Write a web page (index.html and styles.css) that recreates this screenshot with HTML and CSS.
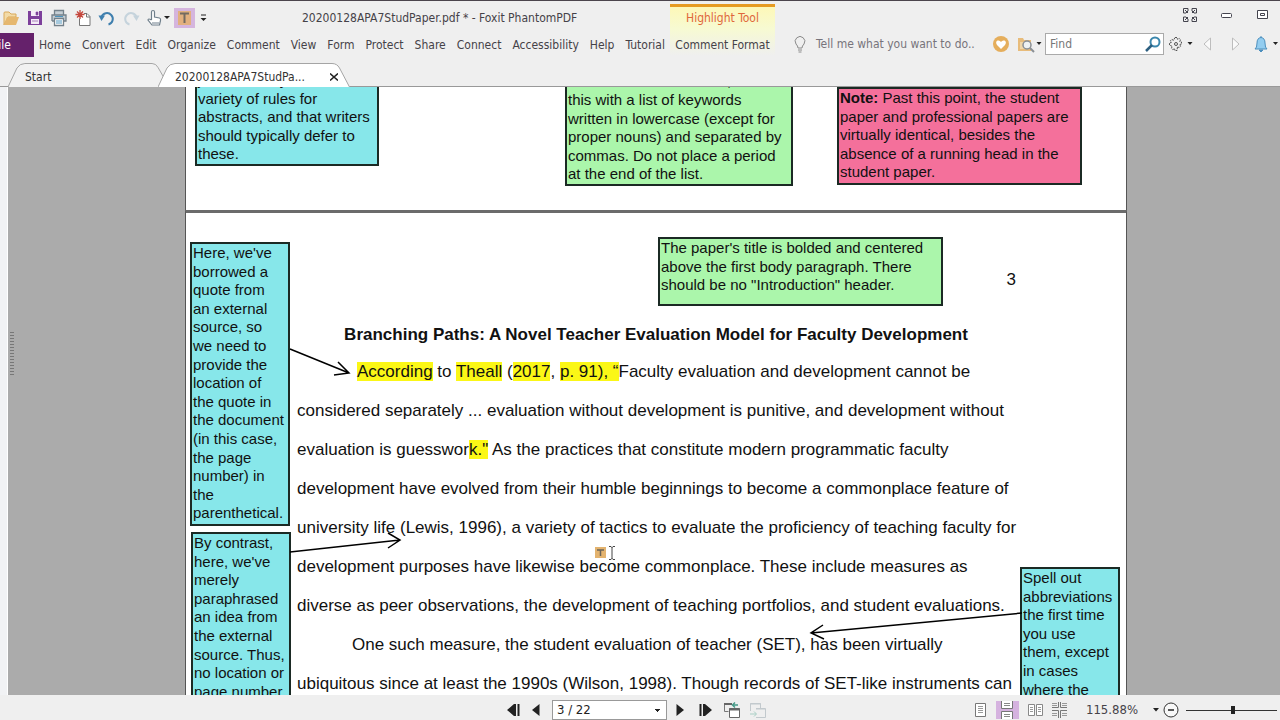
FILE: index.html
```html
<!DOCTYPE html>
<html lang="en">
<head>
<meta charset="utf-8">
<title>20200128APA7StudPaper.pdf * - Foxit PhantomPDF</title>
<link rel="stylesheet" href="styles.css">
</head>
<body>
<div class="app">
  <header class="ribbon">
    <div class="ribbon-main">
      <div class="quick">
        <button class="tool" aria-label="Open"><svg width="18" height="18" viewBox="0 0 18 18"><path d="M2 16V4q0-1 1-1h4l2 2h5v3H6z" fill="#f3dba8" stroke="#d9a95b"/><path d="M2 16l3-8h12l-3 8z" fill="#e6b870"/></svg></button>
        <button class="tool" aria-label="Save"><svg width="18" height="18" viewBox="0 0 18 18"><path d="M2 2h14v14H2z" fill="#7d3f9b"/><path d="M5 2h8v5H5zM5 10h8v5H5z" fill="#f3eaf6"/><path d="M10 3h2v3h-2zM6 12h6" fill="#7d3f9b" stroke="#7d3f9b" stroke-width=".6"/></svg></button>
        <button class="tool" aria-label="Print"><svg width="18" height="18" viewBox="0 0 18 18"><path d="M4.500 6V1.500h9V6M2 12V6h14v6h-2M4 12H2" fill="#c6cfd5" stroke="#74818a" stroke-width="1.300"/><path d="M4.500 9.500h9v7h-9z" fill="#fff" stroke="#74818a" stroke-width="1.300"/><path d="M6 12h6M6 14h6" stroke="#4c94bd"/><path d="M5 7.500h8" stroke="#4c94bd"/></svg></button>
        <button class="tool" aria-label="New"><svg width="18" height="18" viewBox="0 0 18 18"><path d="M10 4.500h3l3 3v9H5.500V10" fill="#fff" stroke="#777"/><path d="M12.500 4.500V8H16" fill="none" stroke="#777"/><path d="M6 1v9M1.500 5.500h9M3 2.500l6 6M9 2.500l-6 6" stroke="#c5473d" stroke-width="1.300"/></svg></button>
        <button class="tool" aria-label="Undo"><svg width="18" height="18" viewBox="0 0 18 18"><path d="M3.500 8a5.800 5.800 0 1 1 7 7.500" fill="none" stroke="#3f7fae" stroke-width="2"/><path d="M.500 6.500H7L3.500 12z" fill="#3f7fae"/></svg></button>
        <button class="tool" aria-label="Redo"><svg width="18" height="18" viewBox="0 0 18 18"><path d="M14.500 8a5.800 5.800 0 1 0-7 7.500" fill="none" stroke="#c5d3dc" stroke-width="2"/><path d="M17.500 6.500H11l3.500 5.500z" fill="#c5d3dc"/></svg></button>
        <button class="tool" aria-label="Hand"><svg width="24" height="18" viewBox="0 0 24 18"><path d="M5.500 11V3q0-1.500 1.500-1.500T8.500 3v5l5 1q1.500.500 1 2.500l-1 4.500H6l-4-5q0-2 3.500 0M6 14h7" fill="#fff" stroke="#6f7f8b" stroke-width="1.200"/><path d="M18 7h6l-3 3z" fill="#222"/></svg></button>
        <button class="tool tool-active" aria-label="Highlight"><svg width="21" height="20" viewBox="0 0 21 20"><path d="M4 3h13v14H4z" fill="#e2b07e"/><path d="M6 5.500h9M10.500 5.500V15" stroke="#746a60" stroke-width="2"/></svg></button>
        <button class="tool tool-more" aria-label="Customize"><svg width="7" height="8" viewBox="0 0 7 8"><path d="M1 1h5" stroke="#222"/><path d="M.500 4h6l-3 3z" fill="#222"/></svg></button>
        <h1 class="window-title">20200128APA7StudPaper.pdf * - Foxit PhantomPDF</h1>
      </div>
      <nav class="menu">
        <button class="file">File</button>
        <button>Home</button><button>Convert</button><button>Edit</button><button>Organize</button><button>Comment</button><button>View</button><button>Form</button><button>Protect</button><button>Share</button><button>Connect</button><button>Accessibility</button><button>Help</button><button>Tutorial</button>
      </nav>
    </div>
    <div class="context">
      <span class="context-name">Highlight Tool</span>
      <button class="context-menu">Comment Format</button>
    </div>
    <div class="ribbon-side">
      <div class="window-controls">
        <button aria-label="Full screen"><svg width="14" height="14" viewBox="0 0 14 14" fill="none" stroke="#44444e"><path d="M.500 5V.500H5V3L3 5zM9 .500h4.500V5H11L9 3zM.500 9v4.500H5V11L3 9zM9 13.500h4.500V9H11l-2 2zM2 2l3 3M12 2L9 5M2 12l3-3M12 12L9 9"/></svg></button>
        <button aria-label="Minimize"><svg width="12" height="14" viewBox="0 0 12 14"><rect x=".5" y="5.500" width="10" height="4" rx="1" fill="#fff" stroke="#44444e"/></svg></button>
        <button aria-label="Restore"><svg width="12" height="14" viewBox="0 0 12 14" fill="#fff" stroke="#44444e"><path d="M.500 2.500h10v8H.500zM3.500 5.500h4v2h-4z"/></svg></button>
      </div>
      <div class="search-row">
        <svg class="bulb" width="12" height="17" viewBox="0 0 12 17" fill="none" stroke="#8a8a8a"><path d="M4 12q0-2-2-4a4.800 4.800 0 1 1 8 0q-2 2-2 4zM4 14h4M4.500 16h3"/></svg>
        <span class="tell">Tell me what you want to do..</span>
        <button aria-label="Favorites"><svg width="16" height="16" viewBox="0 0 16 16"><circle cx="8" cy="8" r="8" fill="#e5ae5c"/><path d="M8 13L4 9Q2 6 4.500 4.500 7 4 8 6q1-2 3.500-1.500Q14 6 12 9z" fill="#fff"/></svg></button>
        <button class="find-folder" aria-label="Search files"><svg width="25" height="17" viewBox="0 0 25 17"><path d="M1 15V2h5l1 2h7v11z" fill="#e8bc7b"/><path d="M3 6h9v7H3z" fill="#f1d6a8"/><circle cx="10" cy="9" r="4" fill="#eef1f2" stroke="#8a8f94" stroke-width="1.500"/><path d="M13 12l4 4" stroke="#8a8f94" stroke-width="2"/><path d="M19.500 6h5L22 9z" fill="#222"/></svg></button>
        <label class="find"><input type="text" placeholder="Find" aria-label="Find"><svg width="16" height="16" viewBox="0 0 16 16"><circle cx="10" cy="6" r="4.500" fill="#fff" stroke="#3b87ad" stroke-width="2"/><path d="M7 9l-6 6" stroke="#2d5f80" stroke-width="2.500"/></svg></label>
        <button class="gear" aria-label="Settings"><svg width="25" height="16" viewBox="0 0 25 16"><path d="M7 1.500h2l.5 1.800 1.700-.9 1.400 1.400-.9 1.700 1.800.5v2l-1.800.5.9 1.700-1.400 1.400-1.700-.9L9 14.500H7l-.5-1.800-1.700.9-1.400-1.400.9-1.700L1.500 9V7l1.800-.5-.9-1.700 1.400-1.400 1.700.9z" fill="none" stroke="#555" stroke-dasharray="2 .7"/><circle cx="8" cy="8" r="1.500" fill="none" stroke="#555"/><path d="M19.500 6h5L22 9z" fill="#222"/></svg></button>
        <button class="prev" aria-label="Previous"><svg width="9" height="14" viewBox="0 0 9 14"><path d="M7.500 1v12L1 7z" fill="#fafafa" stroke="#bdbdbd"/></svg></button>
        <button class="next" aria-label="Next"><svg width="9" height="14" viewBox="0 0 9 14"><path d="M1.500 1v12L8 7z" fill="#fafafa" stroke="#bdbdbd"/></svg></button>
        <button class="bell" aria-label="Notifications"><svg width="25" height="16" viewBox="0 0 25 16"><path d="M1 13q2-1 2-6 0-5 4-5.500 4 .500 4 5.500 0 5 2 6z" fill="#93cdf0" stroke="#4c8fbd"/><path d="M5 14h4l-2 2zM7 0v2" fill="#4c8fbd" stroke="#4c8fbd"/><path d="M19 6h5l-2.500 3z" fill="#222"/></svg></button>
      </div>
    </div>
  </header>

  <div class="tabs" role="tablist">
    <button class="tab tab-start" role="tab"><svg class="tab-shape" viewBox="0 0 158 24" preserveAspectRatio="none"><path d="M0 24L9 5q3-4.500 8-4.500h128q4 0 6 4l7 12V24" fill="#f1f1f1"/><path d="M0 24L9 5q3-4.500 8-4.500h128q4 0 6 4l7 12" fill="none" stroke="#a5a5a5"/></svg><span>Start</span></button>
    <button class="tab tab-open" role="tab" aria-selected="true"><svg class="tab-shape" viewBox="0 0 192 24" preserveAspectRatio="none"><path d="M0 24L9 5q3-4.500 8-4.500h157q5 0 7.500 4.500l10 19" fill="#fff" stroke="#a5a5a5"/></svg><span>20200128APA7StudPa...</span><svg class="close" width="8" height="8" viewBox="0 0 8 8"><path d="M0 .500l8 7M8 .500l-8 7" stroke="#222" stroke-width="1.500"/></svg></button>
  </div>

  <main class="workspace">
    <aside class="side-rail"></aside>
    <div class="canvas">
      <div class="grip"></div>
      <div class="pages">
        <section class="page page-abstract">
          <p class="note cyan n-journals">journals, may have a<br>variety of rules for<br>abstracts, and that writers<br>should typically defer to<br>these.</p>
          <p class="note green n-keywords">and in italic. Then follow,<br>this with a list of keywords<br>written in lowercase (except for<br>proper nouns) and separated by<br>commas. Do not place a period<br>at the end of the list.</p>
          <p class="note pink n-point"><b>Note:</b> Past this point, the student<br>paper and professional papers are<br>virtually identical, besides the<br>absence of a running head in the<br>student paper.</p>
        </section>
        <section class="page page-body">
          <div class="page-number">3</div>
          <h2>Branching Paths: A Novel Teacher Evaluation Model for Faculty Development</h2>
          <p class="first"><mark>According</mark> to <mark>Theall</mark> (<mark>2017</mark>, <mark>p. 91), “</mark>Faculty evaluation and development cannot be</p>
          <p>considered separately ... evaluation without development is punitive, and development without<br>evaluation is guesswor<mark>k."</mark> As the practices that constitute modern programmatic faculty<br>development have evolved from their humble beginnings to become a commonplace feature of<br>university life (Lewis, 1996), a variety of tactics to evaluate the proficiency of teaching faculty for<br>development purposes have likewise become commonplace. These include measures as<br>diverse as peer observations, the development of teaching portfolios, and student evaluations.</p>
          <p class="indent">One such measure, the student evaluation of teacher (SET), has been virtually<br>ubiquitous since at least the 1990s (Wilson, 1998). Though records of SET-like instruments can</p>
          <p class="note green n-title">The paper's title is bolded and centered<br>above the first body paragraph. There<br>should be no "Introduction" header.</p>
          <p class="note cyan n-quote">Here, we've<br>borrowed a<br>quote from<br>an external<br>source, so<br>we need to<br>provide the<br>location of<br>the quote in<br>the document<br>(in this case,<br>the page<br>number) in<br>the<br>parenthetical.</p>
          <p class="note cyan n-contrast">By contrast,<br>here, we've<br>merely<br>paraphrased<br>an idea from<br>the external<br>source. Thus,<br>no location or<br>page number</p>
          <p class="note cyan n-spell">Spell out<br>abbreviations<br>the first time<br>you use<br>them, except<br>in cases<br>where the</p>
          <svg class="arrows" width="940" height="482" viewBox="0 0 940 482" fill="none" stroke="#000" stroke-width="1.500"><path d="M103 136L162 160M151 149L162 160L147 162M103 339L213 327M201 320L213 327L201 335M835 400L624 420M636 412L624 420L637 426"/></svg>
          <svg class="cursor" width="22" height="16" viewBox="0 0 22 16"><path d="M1 2h11v11H1z" fill="#e3b36f"/><path d="M3 5h7M6.500 5v6" stroke="#6b6458" stroke-width="1.500"/><path d="M15 1.500h2l1 1 1-1h2M18 2v12M15 14.500h2l1-1 1 1h2" fill="none" stroke="#444"/></svg>
        </section>
      </div>
    </div>
  </main>

  <footer class="status">
    <div class="pager">
      <button aria-label="First page"><svg width="13" height="14" viewBox="0 0 13 14" fill="#222"><path d="M7 1v12L0 7zM7 1h2v12H7zM10.500 1h2v12h-2z"/></svg></button>
      <button aria-label="Previous page"><svg width="8" height="14" viewBox="0 0 8 14"><path d="M7.500 1v12L0 7z" fill="#222"/></svg></button>
      <select aria-label="Page"><option>3 / 22</option></select>
      <button aria-label="Next page"><svg width="8" height="14" viewBox="0 0 8 14"><path d="M.500 1v12L8 7z" fill="#222"/></svg></button>
      <button class="last" aria-label="Last page"><svg width="13" height="14" viewBox="0 0 13 14" fill="#222"><path d="M6 1v12l7-6zM4 1h2v12H4zM.500 1h2v12h-2z"/></svg></button>
      <button aria-label="Previous view"><svg width="16" height="17" viewBox="0 0 16 17"><path d="M4.500 9.500h-4v-8h7" fill="none" stroke="#777"/><path d="M0 2h8" stroke="#666" stroke-width="2"/><path d="M5.500 6.500h10v9h-10z" fill="#fff" stroke="#666"/><path d="M5 7.500h11" stroke="#666" stroke-width="2"/><path d="M14 3H9M11 .500L8.500 3 11 5.500" fill="none" stroke="#479b89" stroke-width="1.500"/></svg></button>
      <button class="next-view" aria-label="Next view"><svg width="16" height="17" viewBox="0 0 16 17" fill="none" stroke="#c2c9cd"><path d="M.500 9V1.500h10v5M6 6.500h9.500v9H6M0 2h11M6 7h9"/><path d="M0 12h6M4 9.500L6.500 12 4 14.500" stroke="#a9cfc5"/></svg></button>
    </div>
    <div class="view-tools">
      <button aria-label="Single page"><svg width="12" height="16" viewBox="0 0 12 16"><path d="M.500 1.500h10v13H.500z" fill="#fff" stroke="#777"/><path d="M3 4.500h5M3 6.500h5M3 8.500h5M3 10.500h5" stroke="#999"/></svg></button>
      <button class="selected" aria-label="Continuous"><svg width="12" height="18" viewBox="0 0 12 18"><path d="M.500 0v7.500h11V0M.500 18v-7.500h11V18" fill="#fff" stroke="#777"/><path d="M3 2.500h6M3 4.500h6M3 13.500h6M3 15.500h6" stroke="#888"/></svg></button>
      <button aria-label="Facing"><svg width="15" height="16" viewBox="0 0 15 16"><path d="M.500 2.500h6v11h-6zM8.500 2.500h6v11h-6z" fill="#fff" stroke="#888"/><path d="M2 5.500h3M2 7.500h3M2 9.500h3M10 5.500h3M10 7.500h3M10 9.500h3" stroke="#999"/></svg></button>
      <button aria-label="Continuous facing"><svg width="15" height="18" viewBox="0 0 15 18" fill="none" stroke="#777"><path d="M0 6.500h6.500V1M15 6.500H8.500V1M0 9.500h6.500V17M15 9.500H8.500V17"/><path d="M0 2.500h5M0 4.500h5M10 2.500h5M10 4.500h5M0 12.500h5M0 14.500h5M10 12.500h5M10 14.500h5" stroke="#999"/></svg></button>
      <button class="zoom-value"><span>115.88%</span><svg width="6" height="4" viewBox="0 0 6 4"><path d="M0 0h6L3 3.500z" fill="#222"/></svg></button>
      <button aria-label="Zoom out"><svg width="16" height="16" viewBox="0 0 16 16"><circle cx="8" cy="8" r="7" fill="#f8f8f8" stroke="#333"/><path d="M5 8h6" stroke="#222" stroke-width="1.500"/></svg></button>
      <input type="range" min="0" max="100" value="52" aria-label="Zoom">
    </div>
  </footer>
</div>
</body>
</html>
```
FILE: styles.css
```css
* { box-sizing: border-box; }
body { margin: 0; background: #efefef; }
.app {
  display: flex;
  flex-direction: column;
  height: 100vh;
  overflow: hidden;
  border-top: 1px solid #4b454d;
  font: 12px/16px "DejaVu Sans Condensed", "Noto Sans", sans-serif;
  color: #454248;
}
button {
  display: flex;
  align-items: center;
  padding: 0;
  border: 0;
  background: none;
  font: inherit;
  color: inherit;
  white-space: nowrap;
}
svg { display: block; flex: none; }

/* Ribbon */
.ribbon { display: flex; height: 61px; flex: none; }
.ribbon-main { flex: none; width: 670px; }
.quick { display: flex; align-items: center; height: 33px; padding-left: 2px; gap: 6px; }
.tool-active { background: #d5b5de; margin-left: -2px; }
.tool-more { margin-left: -1px; }
.window-title { margin: 0 0 0 89px; font: inherit; white-space: nowrap; }
.menu { display: flex; align-items: center; height: 22px; gap: 11px; }
.menu .file {
  justify-content: flex-end;
  width: 34px;
  height: 24px;
  margin-right: -6px;
  padding-right: 23px;
  background: #65216b;
  color: #fff;
}
.context {
  display: flex;
  flex-direction: column;
  align-items: center;
  flex: none;
  width: 105px;
  height: 57px;
  margin-top: 3px;
  border-top: 3px solid #e69b23;
  background: linear-gradient(#fdf8b8, #f7fad2 40%, #efefef 90%);
}
.context-name { padding: 3px 0 11px; color: #e0673a; }
.ribbon-side { flex: 1; min-width: 0; }
.window-controls {
  display: flex;
  align-items: center;
  justify-content: flex-end;
  height: 28px;
  padding-right: 11px;
  gap: 24px;
}
.search-row { display: flex; align-items: center; height: 30px; padding: 0 1px 0 19px; }
.tell { margin: 0 auto 0 10px; color: #77747b; white-space: nowrap; }
.find-folder { margin-left: 8px; }
.find {
  display: flex;
  align-items: center;
  width: 119px;
  height: 22px;
  margin: 0 4px 0 3px;
  padding: 0 2px 0 4px;
  border: 1px solid #aaa;
  background: #fff;
}
.find input { flex: 1; min-width: 0; padding: 0; border: 0; outline: 0; background: none; font: inherit; }
.find input::placeholder { color: #777; opacity: 1; }
.prev { margin-left: 10px; }
.next { margin-left: 19px; }
.bell { margin-left: 14px; }

/* Document tabs */
.tabs { display: flex; flex: none; height: 25px; padding-left: 8px; border-bottom: 1px solid #999; }
.tab { position: relative; height: 24px; color: #333; }
.tab span { position: relative; }
.tab-shape { position: absolute; left: 0; top: 1px; width: 100%; height: 24px; }
.tab-start { width: 157px; padding-left: 17px; padding-top: 5px; }
.tab-open { width: 192px; margin-left: -7px; padding: 5px 12px 0 17px; justify-content: space-between; }
.close { position: relative; }

/* Document area */
.workspace { display: flex; flex: 1; min-height: 0; }
.side-rail { flex: none; width: 8px; background: #f1f2f4; border-right: 1px solid #fff; }
.canvas { position: relative; flex: 1; overflow: hidden; background: #ababab; }
.grip {
  position: absolute;
  left: 2px;
  top: 245px;
  width: 4px;
  height: 43px;
  background: repeating-linear-gradient(#777 0 1px, transparent 1px 3px);
}
.pages { display: grid; grid-template-columns: 177fr 942px 153fr; grid-template-rows: 123px auto; }
.page {
  grid-column: 2;
  position: relative;
  background: #fff;
  border: solid #555;
  border-width: 0 1px;
  font: 17px/39px "Liberation Sans", Arial, sans-serif;
  color: #111;
  white-space: nowrap;
}
.page p { margin: 0; }
.page-abstract { overflow: hidden; }
.page-body { height: 500px; padding-left: 111px; border-top: 3px solid #6b6b6b; }
.page-number { padding: 47px 110px 0 0; text-align: right; }
.page h2 { margin: 18px 0 0; padding-right: 111px; font-size: 17px; line-height: 35px; text-align: center; }
.page .first { padding-left: 60px; }
.page .indent { text-indent: 55px; }
mark { background: #fbf716; color: inherit; }
.page .note {
  position: absolute;
  padding: 0 0 1px 1px;
  border: 2px solid #1b2a24;
  font-size: 15px;
  line-height: 1.24;
}
.cyan { background: #87e7ea; }
.green { background: #abf6ab; }
.pink { background: #f4709b; }
.page .n-journals { left: 9px; bottom: 44px; width: 184px; padding-bottom: 0; }
.page .n-keywords { left: 379px; bottom: 24px; width: 228px; padding-bottom: 0; }
.n-point { left: 651px; bottom: 25px; width: 245px; }
.n-title { left: 472px; top: 24px; width: 285px; height: 69px; }
.n-quote { left: 4px; top: 29px; width: 100px; }
.n-contrast { left: 5px; top: 319px; width: 100px; }
.n-spell { left: 834px; top: 354px; width: 100px; }
.arrows { position: absolute; left: 1px; top: 0; }
.cursor { position: absolute; left: 408px; top: 332px; }

/* Status bar */
.status {
  display: flex;
  align-items: center;
  justify-content: flex-end;
  flex: none;
  height: 25px;
  padding-top: 5px;
}
.pager { display: flex; align-items: center; gap: 12px; margin-right: auto; margin-left: 507px; }
.pager select {
  appearance: none;
  width: 115px;
  height: 20px;
  margin-right: -3px;
  padding: 0 4px;
  border: 1px solid #999;
  border-radius: 0;
  background:
    linear-gradient(#222, #222) right 6px top 8px / 5px 1px no-repeat,
    linear-gradient(#222, #222) right 7px top 9px / 3px 1px no-repeat,
    linear-gradient(#222, #222) right 8px top 10px / 1px 1px no-repeat #fff;
  font: inherit;
  font-size: 13px;
  color: #222;
}
.pager .last { margin-left: 3px; }
.pager .next-view { margin-left: -2px; }
.view-tools { display: flex; align-items: center; gap: 9px; }
.view-tools .selected { width: 23px; height: 18px; justify-content: center; background: #d5b2df; }
.zoom-value { gap: 15px; margin-left: 10px; margin-right: -5px; font-size: 13px; }
.view-tools input { appearance: none; width: 91px; height: 16px; margin: 0 3px 0 -2px; background: linear-gradient(#333, #333) center / 100% 1px no-repeat; }
.view-tools input::-webkit-slider-thumb { appearance: none; width: 4px; height: 8px; background: #222; }
```
